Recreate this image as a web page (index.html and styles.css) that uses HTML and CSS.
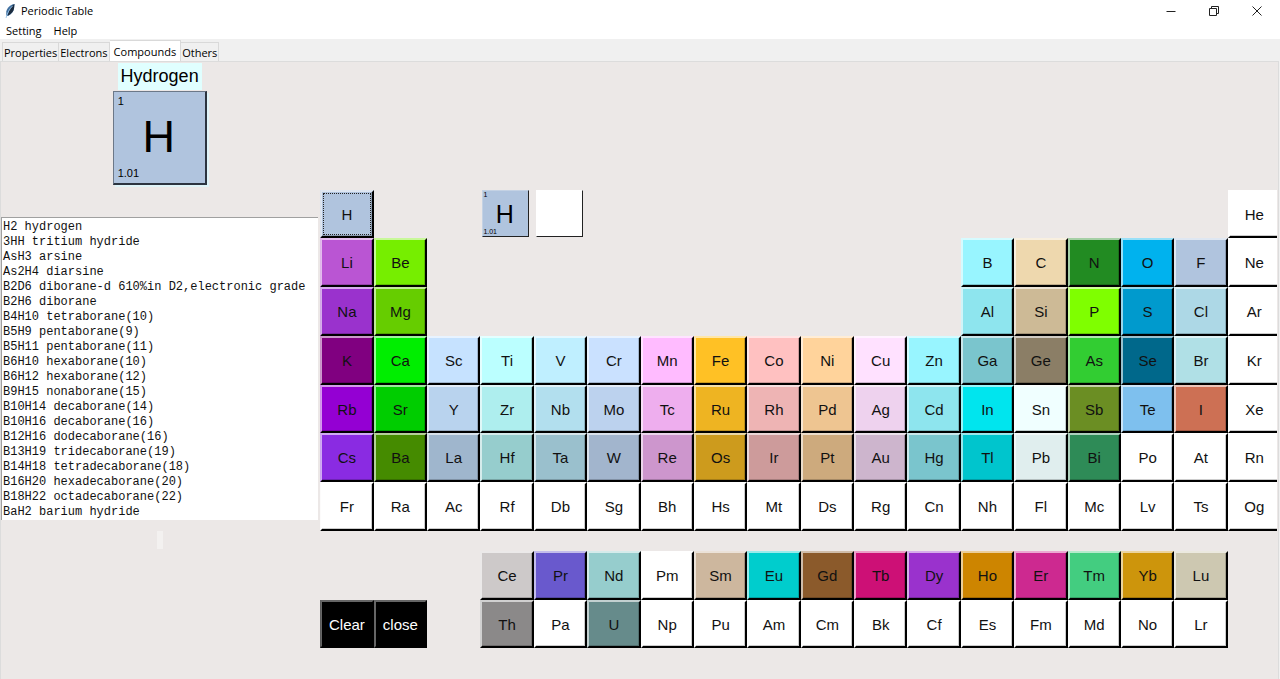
FILE: index.html
```html
<!DOCTYPE html>
<html lang="en">
<head>
<meta charset="utf-8">
<title>Periodic Table</title>
<link rel="stylesheet" href="styles.css">
</head>
<body>
<header class="titlebar">
  <svg class="app-icon" viewBox="0 0 12 16" aria-hidden="true">
    <path d="M10.500 1C6 1.500 3 5 2.300 8.500L2.200 12.500L4 13C7.500 11.500 9.500 8.500 10 5.500Z" fill="#3f6f9f"/>
    <path d="M10.500 1L8 3L5 8L3.500 12.800C7.500 11 9.500 8.500 10 5.500Z" fill="#1c2c3f"/>
    <path d="M8.500 3C5.500 6 3.500 9.500 2 15" fill="none" stroke="#9cc4e8" stroke-width=".9"/>
  </svg>
  <h1 class="title">Periodic Table</h1>
  <div class="window-controls">
    <button class="win-btn" aria-label="Minimize"><svg viewBox="0 0 12 12"><path d="M1.500 6.500H10.500"/></svg></button>
    <button class="win-btn" aria-label="Restore"><svg viewBox="0 0 12 12"><path d="M1.500 3.500H8.500V10.500H1.500ZM3.500 3V1.500H10.500V8.500H9"/></svg></button>
    <button class="win-btn" aria-label="Close"><svg viewBox="0 0 12 12"><path d="M1.500 1.500L10.500 10.500M10.500 1.500L1.500 10.500"/></svg></button>
  </div>
</header>
<nav class="menubar">
  <button class="menu">Setting</button>
  <button class="menu">Help</button>
</nav>
<div class="tabs" role="tablist">
  <button class="tab" role="tab">Properties</button>
  <button class="tab" role="tab">Electrons</button>
  <button class="tab tab-active" role="tab" aria-selected="true">Compounds</button>
  <button class="tab" role="tab">Others</button>
</div>
<main class="pane">
  <section class="side">
    <h2 class="element-name">Hydrogen</h2>
    <div class="card card-large">
      <span class="card-number">1</span>
      <span class="card-symbol">H</span>
      <span class="card-mass">1.01</span>
    </div>
    <textarea class="compounds" rows="20" readonly spellcheck="false" wrap="off" aria-label="Compounds">H2 hydrogen
3HH tritium hydride
AsH3 arsine
As2H4 diarsine
B2D6 diborane-d 610%in D2,electronic grade
B2H6 diborane
B4H10 tetraborane(10)
B5H9 pentaborane(9)
B5H11 pentaborane(11)
B6H10 hexaborane(10)
B6H12 hexaborane(12)
B9H15 nonaborane(15)
B10H14 decaborane(14)
B10H16 decaborane(16)
B12H16 dodecaborane(16)
B13H19 tridecaborane(19)
B14H18 tetradecaborane(18)
B16H20 hexadecaborane(20)
B18H22 octadecaborane(22)
BaH2 barium hydride</textarea>
    <div class="empty-label"></div>
  </section>
  <section class="table">
    <button class="el h focused">H</button>
    <div class="card card-small">
      <span class="card-number">1</span>
      <span class="card-symbol">H</span>
      <span class="card-mass">1.01</span>
    </div>
    <div class="card card-empty"></div>
    <button class="el he">He</button>

    <button class="el li">Li</button>
    <button class="el be">Be</button>
    <button class="el b p-start">B</button>
    <button class="el c">C</button>
    <button class="el n">N</button>
    <button class="el o">O</button>
    <button class="el f">F</button>
    <button class="el">Ne</button>

    <button class="el na">Na</button>
    <button class="el mg">Mg</button>
    <button class="el al p-start">Al</button>
    <button class="el si">Si</button>
    <button class="el p">P</button>
    <button class="el s">S</button>
    <button class="el cl">Cl</button>
    <button class="el">Ar</button>

    <button class="el k">K</button>
    <button class="el ca">Ca</button>
    <button class="el sc">Sc</button>
    <button class="el ti">Ti</button>
    <button class="el v">V</button>
    <button class="el cr">Cr</button>
    <button class="el mn">Mn</button>
    <button class="el fe">Fe</button>
    <button class="el co">Co</button>
    <button class="el ni">Ni</button>
    <button class="el cu">Cu</button>
    <button class="el zn">Zn</button>
    <button class="el ga">Ga</button>
    <button class="el ge">Ge</button>
    <button class="el as">As</button>
    <button class="el se">Se</button>
    <button class="el br">Br</button>
    <button class="el">Kr</button>

    <button class="el rb">Rb</button>
    <button class="el sr">Sr</button>
    <button class="el y">Y</button>
    <button class="el zr">Zr</button>
    <button class="el nb">Nb</button>
    <button class="el mo">Mo</button>
    <button class="el tc">Tc</button>
    <button class="el ru">Ru</button>
    <button class="el rh">Rh</button>
    <button class="el pd">Pd</button>
    <button class="el ag">Ag</button>
    <button class="el cd">Cd</button>
    <button class="el in">In</button>
    <button class="el sn">Sn</button>
    <button class="el sb">Sb</button>
    <button class="el te">Te</button>
    <button class="el i">I</button>
    <button class="el">Xe</button>

    <button class="el cs">Cs</button>
    <button class="el ba">Ba</button>
    <button class="el la">La</button>
    <button class="el hf">Hf</button>
    <button class="el ta">Ta</button>
    <button class="el w">W</button>
    <button class="el re">Re</button>
    <button class="el os">Os</button>
    <button class="el ir">Ir</button>
    <button class="el pt">Pt</button>
    <button class="el au">Au</button>
    <button class="el hg">Hg</button>
    <button class="el tl">Tl</button>
    <button class="el pb">Pb</button>
    <button class="el bi">Bi</button>
    <button class="el">Po</button>
    <button class="el">At</button>
    <button class="el">Rn</button>

    <button class="el">Fr</button>
    <button class="el">Ra</button>
    <button class="el">Ac</button>
    <button class="el">Rf</button>
    <button class="el">Db</button>
    <button class="el">Sg</button>
    <button class="el">Bh</button>
    <button class="el">Hs</button>
    <button class="el">Mt</button>
    <button class="el">Ds</button>
    <button class="el">Rg</button>
    <button class="el">Cn</button>
    <button class="el">Nh</button>
    <button class="el">Fl</button>
    <button class="el">Mc</button>
    <button class="el">Lv</button>
    <button class="el">Ts</button>
    <button class="el">Og</button>

    <div class="spacer"></div>

    <button class="el ce f-start">Ce</button>
    <button class="el pr">Pr</button>
    <button class="el nd">Nd</button>
    <button class="el">Pm</button>
    <button class="el sm">Sm</button>
    <button class="el eu">Eu</button>
    <button class="el gd">Gd</button>
    <button class="el tb">Tb</button>
    <button class="el dy">Dy</button>
    <button class="el ho">Ho</button>
    <button class="el er">Er</button>
    <button class="el tm">Tm</button>
    <button class="el yb">Yb</button>
    <button class="el lu">Lu</button>

    <button class="el action action-first">Clear</button>
    <button class="el action">close</button>
    <button class="el th f-start">Th</button>
    <button class="el">Pa</button>
    <button class="el u">U</button>
    <button class="el">Np</button>
    <button class="el">Pu</button>
    <button class="el">Am</button>
    <button class="el">Cm</button>
    <button class="el">Bk</button>
    <button class="el">Cf</button>
    <button class="el">Es</button>
    <button class="el">Fm</button>
    <button class="el">Md</button>
    <button class="el">No</button>
    <button class="el">Lr</button>
  </section>
</main>
</body>
</html>
```
FILE: styles.css
```css
* { box-sizing: border-box; }

body {
  margin: 0;
  min-height: 100vh;
  display: flex;
  flex-direction: column;
  overflow: hidden;
  background: #f0f0f0;
  color: #000;
  font-family: "Open Sans", "Noto Sans", sans-serif;
  font-size: 11px;
}

button {
  margin: 0;
  padding: 0;
  border: 0;
  border-radius: 0;
  background: none;
  color: inherit;
  font: inherit;
}

/* Window frame */
.titlebar {
  display: flex;
  align-items: center;
  height: 21px;
  padding: 0 2px 0 4px;
  background: #fff;
}
.app-icon { width: 12px; height: 16px; margin-right: 5px; }
.title { margin: 0; font-size: 11px; font-weight: 400; }
.window-controls { display: flex; margin-left: auto; }
.win-btn { display: grid; place-items: center; width: 43px; height: 20px; }
.win-btn svg { width: 12px; height: 12px; fill: none; stroke: #222; }

.menubar {
  display: flex;
  gap: 12px;
  height: 18px;
  padding: 0 6px;
  background: #fff;
}
.menu { height: 18px; }

/* Notebook */
.tabs {
  display: flex;
  align-items: flex-end;
  height: 22px;
  padding-left: 2px;
}
.tab {
  height: 19px;
  padding: 0 1px;
  border: 1px solid #d9d9d9;
  border-width: 1px 1px 0 0;
}
.tab:first-child { border-left-width: 1px; }
.tab-active { height: 21px; padding: 0 4px; background: #fff; }

.pane {
  flex: 1;
  display: flex;
  margin-right: 1px;
  border: 1px solid #dcdcdc;
  border-bottom: 0;
  background: #ece8e7;
  font-family: "Liberation Sans", Arial, sans-serif;
}

/* Left column */
.side {
  width: 25%;
  padding-right: 2px;
  display: flex;
  flex-direction: column;
  align-items: center;
}
.element-name {
  margin: 1px 0 0;
  padding: 0 3px;
  background: #e0ffff;
  font-size: 18px;
  font-weight: 400;
  line-height: 27px;
}

.card {
  display: flex;
  flex-direction: column;
  background: #b0c4de;
}
.card-symbol { flex: 1; display: grid; place-items: center; }
.card-large {
  width: 94px;
  height: 94px;
  margin-top: 1px;
  padding: 3px 5px 4px 4px;
  border: 1px solid #6c7888;
  border-width: 1px 2px 2px 1px;
  border-color: #6c7888 #2c3440 #2c3440 #6c7888;
  box-shadow: 2px 2px 0 #e0f4f8;
  font-size: 11px;
  line-height: 12px;
}
.card-large .card-symbol { font-size: 45px; }

.compounds {
  display: block;
  width: 100%;
  height: 303px;
  margin: 32px 0 0;
  padding: 2px 1px;
  border: 1px solid #a0a0a0;
  border-width: 1px 0 0 1px;
  border-radius: 0;
  outline: 0;
  resize: none;
  overflow: hidden;
  background: #fff;
  color: #111;
  font-family: "Liberation Mono", "Courier New", monospace;
  font-size: 12px;
  line-height: 15px;
}
.empty-label { width: 6px; height: 18px; margin-top: 11px; background: #f3f1f0; }

/* Element grid */
.table {
  flex: 1;
  min-width: 0;
  display: grid;
  grid-template-columns: repeat(18, minmax(0, 1fr));
  grid-template-rows: 48px 49px 49px 49px 48px 49px 49px 20px 49px 48px;
  margin-right: -3px;
  padding: 128px 0 31px;
  clip-path: inset(0 4px 0 0);
}
.he { grid-column: 18; }
.p-start { grid-column: 13; }
.f-start { grid-column: 4; }
.spacer { grid-column: 1 / -1; }
.action-first { grid-column: 1; }

.el {
  border: 2px solid #000;
  border-top-color: rgba(255, 255, 255, .6);
  border-left-color: rgba(255, 255, 255, .6);
  box-shadow: inset -1px -1px 0 rgba(0, 0, 0, .2);
  background-color: #fff;
  color: #111;
  font-size: 15px;
}
.focused { outline: 1px dotted #222; outline-offset: -4px; }
.action { background-color: #000; border-top-color: #666; border-left-color: #666; color: #fff; }

.card-small, .card-empty {
  width: 47px;
  height: 47px;
  margin-left: 2px;
  border: 1px solid #fff;
  border-right-color: #222;
  border-bottom-color: #222;
}
.card-small {
  grid-column: 4;
  padding-right: 2px;
  border-top-color: #c4d2e4;
  border-left-color: #c4d2e4;
  font-size: 7px;
  line-height: 8px;
}
.card-small .card-symbol { font-size: 25px; }
.card-empty { background: #fff; }

/* Element colours */
.h, .f { background-color: #b0c4de; }
.li { background-color: #ba55d3; }
.na, .dy { background-color: #9a32cd; }
.k { background-color: #800080; }
.rb { background-color: #9400d3; }
.cs { background-color: #8a2be2; }
.be { background-color: #76ee00; }
.mg { background-color: #66cd00; }
.ca { background-color: #00ee00; }
.sr { background-color: #00cd00; }
.ba { background-color: #458b00; }
.sc { background-color: #c6e2ff; }
.y { background-color: #b9d3ee; }
.la { background-color: #9fb6cd; }
.ti { background-color: #bbffff; }
.zr { background-color: #aeeeee; }
.hf, .nd { background-color: #96cdcd; }
.v { background-color: #bfefff; }
.nb { background-color: #b2dfee; }
.ta { background-color: #9ac0cd; }
.cr { background-color: #cae1ff; }
.mo { background-color: #bcd2ee; }
.w { background-color: #a2b5cd; }
.mn { background-color: #ffbbff; }
.tc { background-color: #eeaeee; }
.re { background-color: #cd96cd; }
.fe { background-color: #ffc125; }
.ru { background-color: #eeb422; }
.os { background-color: #cd9b1d; }
.co { background-color: #ffc1c1; }
.rh { background-color: #eeb4b4; }
.ir { background-color: #cd9b9b; }
.ni { background-color: #ffd39b; }
.pd { background-color: #eec591; }
.pt { background-color: #cdaa7d; }
.cu { background-color: #ffe1ff; }
.ag { background-color: #eed2ee; }
.au { background-color: #cdb5cd; }
.zn, .b { background-color: #98f5ff; }
.cd, .al { background-color: #8ee5ee; }
.hg, .ga { background-color: #7ac5cd; }
.in { background-color: #00e5ee; }
.tl { background-color: #00c5cd; }
.c { background-color: #eed8ae; }
.si { background-color: #cdba96; }
.ge { background-color: #8b7e66; }
.sn { background-color: #f0ffff; }
.pb { background-color: #e0eeee; }
.n { background-color: #228b22; }
.p { background-color: #7fff00; }
.as { background-color: #32cd32; }
.sb { background-color: #6b8e23; }
.bi { background-color: #2e8b57; }
.o { background-color: #00b2ee; }
.s { background-color: #009acd; }
.se { background-color: #00688b; }
.te { background-color: #7ec0ee; }
.cl { background-color: #add8e6; }
.br { background-color: #b0e0e6; }
.i { background-color: #cd7054; }
.ce { background-color: #cdc9c9; }
.pr { background-color: #6959cd; }
.sm { background-color: #cdb79e; }
.eu { background-color: #00cdcd; }
.gd { background-color: #8b5a2b; }
.tb { background-color: #cd1076; }
.ho { background-color: #cd8500; }
.er { background-color: #cd2990; }
.tm { background-color: #43cd80; }
.yb { background-color: #cd950c; }
.lu { background-color: #cdc8b1; }
.th { background-color: #8b8989; }
.u { background-color: #668b8b; }
```
